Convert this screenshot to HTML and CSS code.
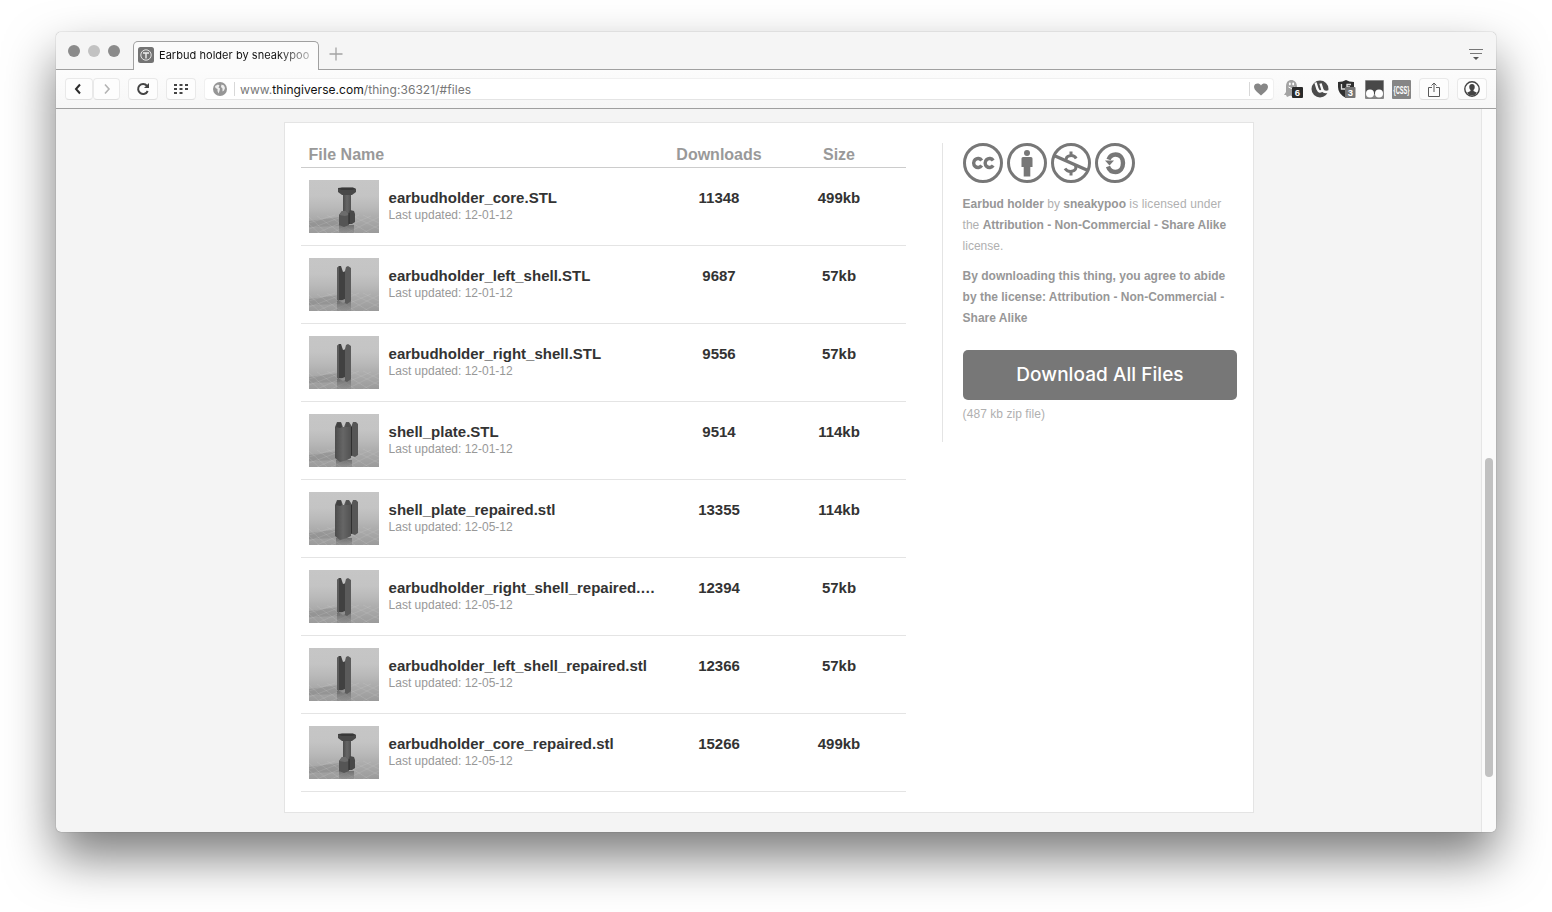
FILE: index.html
```html
<!DOCTYPE html>
<html lang="en">
<head>
<meta charset="utf-8">
<title>Earbud holder by sneakypoo</title>
<link rel="stylesheet" href="styles.css">
</head>
<body>
<svg width="0" height="0" class="defs" aria-hidden="true">
  <defs>
    <linearGradient id="sky" x1="0" y1="0" x2="0" y2="1">
      <stop offset="0" stop-color="#c6c6c6"/><stop offset=".3" stop-color="#c4c4c4"/><stop offset=".52" stop-color="#b9b9b9"/><stop offset=".75" stop-color="#a9a9a9"/><stop offset="1" stop-color="#9b9b9b"/>
    </linearGradient>
    <linearGradient id="refl" x1="0" y1="0" x2="0" y2="1">
      <stop offset="0" stop-color="#555" stop-opacity=".65"/><stop offset="1" stop-color="#666" stop-opacity=".2"/>
    </linearGradient>
    <linearGradient id="body" x1="0" y1="0" x2="1" y2="0">
      <stop offset="0" stop-color="#4c4c4c"/><stop offset=".5" stop-color="#666"/><stop offset="1" stop-color="#525252"/>
    </linearGradient>
    <symbol id="scene" viewBox="0 0 70 53">
      <rect width="70" height="53" fill="url(#sky)"/>
      <path d="M0 41 31 37V46L0 47Z" fill="#777" opacity=".35"/>
      <g stroke="#d0d0d0" stroke-width=".5" opacity=".4" fill="none">
        <path d="M0 37 18 53M8 36 32 53M18 35 46 53M30 35 60 53M42 35 70 49M54 35 70 43M0 44 10 53M70 37 38 53M62 36 22 53M50 35 8 53M38 35 0 49M26 35 0 43M70 45 54 53"/>
      </g>
    </symbol>
    <symbol id="core" viewBox="0 0 70 53">
      <use href="#scene"/>
      <path d="M30 45H45V53H30Z" fill="url(#refl)"/>
      <path d="M34 14H42V33H34Z" fill="url(#body)"/>
      <path d="M29 8 33 7.5H44L47 9V12L43 15H33L29 12Z" fill="#484848"/>
      <path d="M29 8.5 33 7.7H44L47 9 43 10H33Z" fill="#383838"/>
      <path d="M39 34 41 30 45 31 46 34V42L43 44H39Z" fill="#494949"/>
      <path d="M30 35 33 31H37L40 35V45L35 47 30 45Z" fill="#555"/>
      <path d="M30 35 33 31H37L40 35 36 36Z" fill="#6c6c6c"/>
      <path d="M40 33V44" stroke="#2c2c2c"/>
    </symbol>
    <symbol id="shell" viewBox="0 0 70 53">
      <use href="#scene"/>
      <path d="M28 43H42V53H28Z" fill="url(#refl)"/>
      <path d="M28 10 30 8H32L34 14 37 13V43L28 42Z" fill="#414141"/>
      <path d="M28 10 30 8.500V43L28 42Z" fill="#5c5c5c"/>
      <path d="M31 43 36 41 38 43 34 45Z" fill="#8f8f8f"/>
      <path d="M36 13 37 9 39 8 42 10V43L38 46 36 45Z" fill="#5b5b5b"/>
    </symbol>
    <symbol id="plate" viewBox="0 0 70 53">
      <use href="#scene"/>
      <path d="M27 46H43V53H27Z" fill="url(#refl)"/>
      <path d="M41 16 44 8H47L49 10V41L46 43 41 41Z" fill="#565656"/>
      <path d="M41 14 43 12V42L41 41Z" fill="#303030"/>
      <path d="M26 13 28 8H32L34 13H35L37 8H40L42 11V44L38 46 31 48 26 44Z" fill="url(#body)"/>
      <path d="M27 13 28.5 8.5H32L33 13 31 14Z" fill="#414141"/>
      <path d="M36 13 37.5 8.5H39.5L41 13Z" fill="#505050"/>
    </symbol>
  </defs>
</svg>

<div class="window">
  <header class="tabstrip">
    <div class="lights"><i></i><i class="mid"></i><i></i></div>
    <div class="tab">
      <svg class="favicon" width="16" height="16" viewBox="0 0 16 16"><rect width="16" height="16" rx="2.5" fill="#737373"/><circle cx="8" cy="8" r="5.2" fill="none" stroke="#eee" stroke-width=".9"/><path d="M5 6H11M8 6V11.5" stroke="#eee" stroke-width="1.4"/></svg>
      <span class="tab-title">Earbud holder by sneakypoo</span>
    </div>
    <svg class="new-tab" width="14" height="14" viewBox="0 0 14 14"><path d="M7 .5V13.5M.5 7H13.5" stroke="#a3a3a3" stroke-width="1.3"/></svg>
    <svg class="tab-menu" width="14" height="13" viewBox="0 0 14 13"><path d="M0 1.5H14M1 5.5H13" stroke="#777" stroke-width="1.1"/><path d="M4 9H10L7 12Z" fill="#555"/></svg>
  </header>

  <nav class="toolbar">
    <div class="btn back"><svg width="10" height="12" viewBox="0 0 10 12"><path d="M7 1.5 3 6 7 10.5" fill="none" stroke="#2b2b2b" stroke-width="2"/></svg></div>
    <div class="btn forward"><svg width="10" height="12" viewBox="0 0 10 12"><path d="M3 1.5 7 6 3 10.5" fill="none" stroke="#b3b3b3" stroke-width="1.6"/></svg></div>
    <div class="btn reload"><svg width="14" height="14" viewBox="0 0 14 14"><path d="M11.7 9A5 5 0 1 1 11 3.8" fill="none" stroke="#444" stroke-width="2"/><path d="M13 1V6H8Z" fill="#444"/></svg></div>
    <div class="btn dial"><svg width="14" height="10" viewBox="0 0 14 10"><path d="M0 1H14M0 5H14M0 9H9" stroke="#444" stroke-width="2" stroke-dasharray="3 2.500"/></svg></div>
    <div class="address">
      <svg class="globe" width="14" height="14" viewBox="0 0 14 14"><circle cx="7" cy="7" r="7" fill="#969696"/><path d="M2 4 5 2.500 6.500 3.500 5.500 5.500 7 6.500 6.500 9 5.500 11.500 4.500 9 4.500 7 2.500 6ZM8.500 2.500 11 3.500 12 6 11 8.500 9.500 9.500 9.500 6.500 8 5Z" fill="#fff" opacity=".85"/></svg>
      <span class="sep"></span>
      <span class="url">www.<b>thingiverse.com</b>/thing:36321/#files</span>
      <span class="sep heart-sep"></span>
      <svg width="14" height="13" viewBox="0 0 14 13"><path d="M7 12.500C5 10.500 0 7.500 0 3.800 0 .4 5 -.8 7 2.500 9 -.8 14 .4 14 3.800 14 7.500 9 10.500 7 12.500Z" fill="#878787"/></svg>
    </div>
    <div class="extensions">
      <svg width="20" height="20" viewBox="0 0 20 20"><path d="M3 8C3 2 6 1 8.500 1S14 3 14 8V14L15 17 12 16 10 18 7.500 16.500 4 18 3 16 1 16 3 13Z" fill="#a3a3a3"/><ellipse cx="6.800" cy="5" rx="1" ry="1.400" fill="#fff"/><ellipse cx="10.200" cy="5" rx="1" ry="1.400" fill="#fff"/><path d="M5.500 8Q8.500 11 11.500 8" stroke="#fff" fill="none"/><rect x="9" y="8" width="11" height="11" rx="1" fill="#292929"/><text x="14.500" y="17" class="badge-text">6</text></svg>
      <svg width="18" height="18" viewBox="0 0 18 18"><circle cx="9" cy="9" r="8.500" fill="#4b4b4b"/><path d="M4.500 2.500 6.500 9Q8.500 13.500 11.500 10L9.500 3.500M11.300 9.500Q12.500 13 18 11.500" fill="none" stroke="#f9f9f9" stroke-width="2.400"/></svg>
      <svg width="20" height="20" viewBox="0 0 20 20"><path d="M1 3Q6 3 9 1 12 3 17 3V8Q17 15 9 19 1 15 1 8Z" fill="#303030"/><path d="M4.500 5V10H8M9.500 5.500H14M10 5V8M10 8H13" stroke="#ddd" stroke-width="1.300" fill="none"/><rect x="8" y="8" width="10.500" height="11" rx="1" fill="#757575"/><text x="13.300" y="17" class="badge-text">3</text></svg>
      <svg width="19" height="19" viewBox="0 0 19 19"><rect width="19" height="19" rx="1" fill="#858585"/><rect x="1" y="1" width="17" height="13" fill="#484848"/><circle cx="5" cy="13.500" r="4" fill="#fff"/><circle cx="14" cy="13.500" r="4" fill="#fff"/></svg>
      <svg width="19" height="19" viewBox="0 0 19 19"><rect width="19" height="19" rx="1" fill="#858585"/><text x="1.500" y="13.500" textLength="16" lengthAdjust="spacingAndGlyphs" class="css-text">{CSS}</text></svg>
    </div>
    <div class="btn share"><svg width="12" height="15" viewBox="0 0 12 15"><path d="M4 5.500H.500V14.500H11.500V5.500H8M6 10V1M3.500 3.500 6 1 8.500 3.500" fill="none" stroke="#5a5a5a"/></svg></div>
    <div class="btn user"><svg width="16" height="16" viewBox="0 0 16 16"><circle cx="8" cy="8" r="7.200" fill="none" stroke="#444" stroke-width="1.400"/><path d="M8 3C10 3 11 4.500 10.700 6.500 10.500 8 10 8.500 9.500 9V10L13 11.700Q11 14.600 8 14.600T3 11.700L6.500 10V9C6 8.500 5.500 8 5.300 6.500 5 4.500 6 3 8 3Z" fill="#444"/></svg></div>
  </nav>

  <main class="page">
    <section class="card">
      <div class="files">
        <div class="row head"><span class="name">File Name</span><span class="num">Downloads</span><span class="num">Size</span></div>
        <div class="row"><svg class="thumb"><use href="#core"/></svg><div class="name">earbudholder_core.STL<small>Last updated: 12-01-12</small></div><span class="num">11348</span><span class="num">499kb</span></div>
        <div class="row"><svg class="thumb"><use href="#shell"/></svg><div class="name">earbudholder_left_shell.STL<small>Last updated: 12-01-12</small></div><span class="num">9687</span><span class="num">57kb</span></div>
        <div class="row"><svg class="thumb"><use href="#shell"/></svg><div class="name">earbudholder_right_shell.STL<small>Last updated: 12-01-12</small></div><span class="num">9556</span><span class="num">57kb</span></div>
        <div class="row"><svg class="thumb"><use href="#plate"/></svg><div class="name">shell_plate.STL<small>Last updated: 12-01-12</small></div><span class="num">9514</span><span class="num">114kb</span></div>
        <div class="row"><svg class="thumb"><use href="#plate"/></svg><div class="name">shell_plate_repaired.stl<small>Last updated: 12-05-12</small></div><span class="num">13355</span><span class="num">114kb</span></div>
        <div class="row"><svg class="thumb"><use href="#shell"/></svg><div class="name">earbudholder_right_shell_repaired.…<small>Last updated: 12-05-12</small></div><span class="num">12394</span><span class="num">57kb</span></div>
        <div class="row"><svg class="thumb"><use href="#shell"/></svg><div class="name">earbudholder_left_shell_repaired.stl<small>Last updated: 12-05-12</small></div><span class="num">12366</span><span class="num">57kb</span></div>
        <div class="row"><svg class="thumb"><use href="#core"/></svg><div class="name">earbudholder_core_repaired.stl<small>Last updated: 12-05-12</small></div><span class="num">15266</span><span class="num">499kb</span></div>
      </div>
      <aside class="license">
        <div class="cc">
          <svg viewBox="0 0 40 40"><circle cx="20" cy="20" r="18.500"/><path d="M18.700 17.500A4.400 4.500 0 1 0 18.700 22.500M30.200 17.500A4.400 4.500 0 1 0 30.200 22.500" stroke-width="3.400"/></svg>
          <svg viewBox="0 0 40 40"><circle cx="20" cy="20" r="18.500"/><circle class="solid" cx="20" cy="10" r="3"/><path class="solid" d="M16 14H24Q25.500 14 25.500 15.500V24H23.300V33.500H16.700V24H14.500V15.500Q14.500 14 16 14Z"/></svg>
          <svg viewBox="0 0 40 40"><circle cx="20" cy="20" r="18.500"/><path d="M3 12.500 37 27.500" stroke-width="3.400"/><path d="M20 8.500V12.500M20 28V32.500M25.200 15.500C23.500 12.500 20.500 12.500 19 12.700 16 13.100 14.700 15 15.500 17M14 25.500C16 28.500 19 28.700 21 28.300 24.500 27.700 25.500 25.500 24.500 22.500"/></svg>
          <svg viewBox="0 0 40 40"><circle cx="20" cy="20" r="18.500"/><path d="M13.500 16.500C15 13 17.500 11.500 20.500 11.500 25.500 11.500 28 15.500 28 20S25.500 29 20.500 29C16.500 29 14 26.500 13 23.500" stroke-width="4.400"/><path class="solid" d="M10 17.500H19L14.500 22.500Z"/></svg>
        </div>
        <p><b>Earbud holder</b> by <b>sneakypoo</b> <span class="wide">is licensed under</span><br>the <b>Attribution - Non-Commercial - Share Alike</b><br>license.</p>
        <p><b>By downloading this thing, you agree to abide<br>by the license: Attribution - Non-Commercial -<br>Share Alike</b></p>
        <a class="download">Download All Files</a>
        <div class="zip">(487 kb zip file)</div>
      </aside>
    </section>
    <div class="scrollbar"><div class="handle"></div></div>
  </main>
</div>
</body>
</html>
```
FILE: styles.css
```css
* { box-sizing: border-box; }
body { margin: 0; width: 1552px; height: 912px; padding: 32px 56px; overflow: hidden; background: #fff; font-family: "Liberation Sans", Arial, sans-serif; }
svg { display: block; flex: none; }
.defs { position: absolute; }
.window { width: 1440px; height: 800px; border-radius: 5px; background: #f4f4f4; display: flex; flex-direction: column; box-shadow: 0 0 1px rgba(0,0,0,.55), 0 25px 50px rgba(0,0,0,.52); }

.tabstrip { height: 38px; flex: none; border-bottom: 1px solid #a0a0a0; border-radius: 5px 5px 0 0; background: #f5f5f5; display: flex; align-items: flex-end; padding: 0 13px 0 12px; }
.lights { display: flex; gap: 8px; align-self: flex-start; padding-top: 13px; width: 65px; }
.lights i { width: 12px; height: 12px; border-radius: 50%; background: #8b8b8b; }
.lights .mid { background: #c2c2c2; }
.tab { width: 186px; height: 30px; margin-bottom: -2px; border: 1px solid #a0a0a0; border-bottom: 0; border-radius: 5px 5px 0 0; background: #fbfbfb; display: flex; align-items: center; gap: 5px; padding: 0 8px 3px 4px; }
.tab-title { font: 11px Inter, sans-serif; letter-spacing: .04px; white-space: nowrap; overflow: hidden; color: transparent; background: linear-gradient(90deg, #111 118px, #bbb 152px); background-clip: text; }
.new-tab { margin: 0 auto 8px 10px; }
.tab-menu { margin-bottom: 8px; }

.toolbar { height: 39px; flex: none; border-bottom: 1px solid #a0a0a0; background: linear-gradient(#fcfcfc, #f7f7f7); display: flex; align-items: center; padding: 0 9px; }
.btn { height: 22px; border-radius: 4px; border: 1px solid #e9e9e9; border-bottom-color: #dedede; background: #fdfdfd; display: flex; align-items: center; justify-content: center; flex: none; width: 30px; }
.back { width: 28px; padding-right: 2px; }
.forward { width: 27px; margin-right: 8px; }
.reload, .dial { margin-right: 8px; }
.address { flex: 1; height: 22px; border-radius: 4px; background: #fff; border: 1px solid #f0f0f0; border-bottom-color: #e4e4e4; display: flex; align-items: center; padding: 0 5px 0 8px; }
.sep { width: 1px; height: 14px; background: #d8d8d8; margin: 0 5px 0 7px; }
.url { flex: 1; font: 12px Inter, sans-serif; letter-spacing: .06px; color: #777; white-space: nowrap; }
.url b { font-weight: 400; color: #111; }
.heart-sep { margin: 0 4px; }
.extensions { display: flex; align-items: center; gap: 8px; margin: 0 8px 0 9px; }
.badge-text { font: bold 9.5px "Liberation Sans", sans-serif; fill: #fff; text-anchor: middle; }
.css-text { font: bold 11px "Liberation Sans", sans-serif; fill: #fff; }
.share { margin-right: 8px; }

.page { flex: 1; min-height: 0; display: flex; justify-content: space-between; padding-left: 228px; }
.card { width: 970px; height: 691px; margin-top: 13px; border: 1px solid #e4e4e4; background: #fff; display: flex; justify-content: space-between; padding: 20px 16px; }
.files { width: 605px; }
.row { height: 78px; border-bottom: 1px solid #e4e4e4; display: flex; padding: 12px 7px 12px 8px; font-weight: bold; font-size: 15px; line-height: 17px; color: #333; }
.thumb { width: 70px; height: 53px; margin-right: 9.6px; }
.name { flex: 1; padding-top: 9px; white-space: nowrap; }
.name small { display: block; font-weight: normal; font-size: 12px; line-height: 19px; color: #989898; }
.num { width: 120px; padding-top: 9px; text-align: center; }
.head { height: 25px; padding: 2px 7px 0 7.6px; font-size: 16px; line-height: 20px; color: #999; border-color: #ccc; }
.head span { padding-top: 0; }

.license { width: 295px; height: 299px; border-left: 1px solid #e4e4e4; padding-left: 20px; font-size: 12px; line-height: 20.8px; color: #999; }
.cc { display: flex; gap: 4px; margin-bottom: 11px; }
.cc svg { width: 40px; height: 40px; fill: none; stroke: #777; stroke-width: 3; }
.cc .solid { fill: #777; stroke: none; }
.license p { margin: 0 0 10px -.4px; color: #b0b0b0; white-space: nowrap; }
.license b { color: #979797; }
.wide { letter-spacing: .12px; }
.download { display: block; height: 50px; margin-top: 21px; border-radius: 5px; background: #777; color: #fff; text-align: center; font: 500 19px/49px Inter, sans-serif; letter-spacing: .05px; }
.zip { color: #b0b0b0; margin: 4px 0 0 -.4px; letter-spacing: .06px; }

.scrollbar { width: 15px; border-left: 1px solid #e5e5e5; background: #fafafa; border-radius: 0 0 5px 0; padding: 349px 3px 0; }
.handle { width: 8px; height: 319px; border-radius: 4px; background: #c1c1c1; }
```
